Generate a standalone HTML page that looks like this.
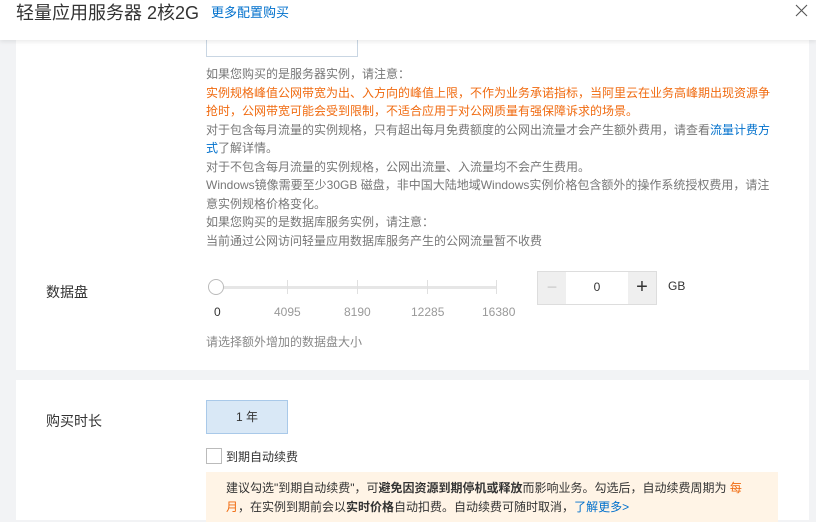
<!DOCTYPE html>
<html><head><meta charset="utf-8"><style>
*{margin:0;padding:0;box-sizing:border-box}
body{width:816px;height:519px;overflow:hidden;background:#f2f3f5;font-family:"Liberation Sans","Noto Sans CJK SC",sans-serif;position:relative;color:#666}
.a{position:absolute;white-space:nowrap}
.hdr{position:absolute;left:0;top:0;width:816px;height:40px;background:#fff;box-shadow:0 2px 4px rgba(0,0,0,.08);z-index:5}
.card{position:absolute;left:16px;width:793px;background:#fff}
.t{font-size:12px;line-height:18.5px;color:#777}
.o{color:#f06a0f}
.b{color:#0070cc}
</style></head><body>
<div class="hdr">
<div class="a" style="left:16px;top:0;font-size:18px;line-height:26px;color:#333">轻量应用服务器 2核2G</div>
<div class="a" style="left:211px;top:3px;font-size:13px;line-height:20px;color:#0070cc">更多配置购买</div>
<svg class="a" style="left:795px;top:4px" width="13" height="13" viewBox="0 0 13 13"><path d="M1 1L12 12M12 1L1 12" stroke="#555" stroke-width="1.1"/></svg>
</div>
<div class="card" style="top:30px;height:340px"></div>
<div class="a" style="left:206px;top:30px;width:152px;height:27px;border:1px solid #c9d6e3"></div>
<div class="a t" style="left:206px;top:65px;width:572px;white-space:normal">
如果您购买的是服务器实例，请注意：<br>
<span class="o">实例规格峰值公网带宽为出、入方向的峰值上限，不作为业务承诺指标，当阿里云在业务高峰期出现资源争抢时，公网带宽可能会受到限制，不适合应用于对公网质量有强保障诉求的场景。</span><br>
对于包含每月流量的实例规格，只有超出每月免费额度的公网出流量才会产生额外费用，请查看<span class="b">流量计费方式</span>了解详情。<br>
对于不包含每月流量的实例规格，公网出流量、入流量均不会产生费用。<br>
Windows镜像需要至少30GB 磁盘，非中国大陆地域Windows实例价格包含额外的操作系统授权费用，请注意实例规格价格变化。<br>
如果您购买的是数据库服务实例，请注意：<br>
当前通过公网访问轻量应用数据库服务产生的公网流量暂不收费</div>
<div class="a" style="left:46px;top:282px;font-size:14px;color:#333">数据盘</div>
<div class="a" style="left:216px;top:286px;width:280px;height:3px;background:#e6e6e6"></div>
<div class="a" style="left:287px;top:280px;width:1px;height:14px;background:#e0e0e0"></div>
<div class="a" style="left:357px;top:280px;width:1px;height:14px;background:#e0e0e0"></div>
<div class="a" style="left:427px;top:280px;width:1px;height:14px;background:#e0e0e0"></div>
<div class="a" style="left:496px;top:280px;width:1px;height:14px;background:#e0e0e0"></div>
<div class="a" style="left:208px;top:279px;width:16px;height:16px;border-radius:50%;border:1px solid #bbb;background:#fff"></div>
<div class="a" style="left:214px;top:305px;font-size:12px;color:#333">0</div>
<div class="a" style="left:274px;top:305px;font-size:12px;color:#999">4095</div>
<div class="a" style="left:344px;top:305px;font-size:12px;color:#999">8190</div>
<div class="a" style="left:411px;top:305px;font-size:12px;color:#999">12285</div>
<div class="a" style="left:482px;top:305px;font-size:12px;color:#999">16380</div>
<div class="a" style="left:206px;top:333px;font-size:12px;color:#888">请选择额外增加的数据盘大小</div>
<div class="a" style="left:537px;top:271px;width:120px;height:34px;border:1px solid #ddd;background:#fff"></div>
<div class="a" style="left:538px;top:272px;width:28px;height:32px;background:#efefef;color:#ccc;font-size:18px;text-align:center;line-height:30px">−</div>
<div class="a" style="left:628px;top:272px;width:28px;height:32px;background:#efefef;color:#333;font-size:20px;text-align:center;line-height:30px">+</div>
<div class="a" style="left:566px;top:280px;width:62px;text-align:center;font-size:12px;color:#333">0</div>
<div class="a" style="left:668px;top:279px;font-size:12px;color:#333">GB</div>
<div class="card" style="top:380px;height:140px"></div>
<div class="a" style="left:46px;top:411px;font-size:14px;color:#333">购买时长</div>
<div class="a" style="left:206px;top:400px;width:82px;height:34px;background:#d9e8f6;border:1px solid #a9c9e9;font-size:12px;color:#333;text-align:center;line-height:32px">1 年</div>
<div class="a" style="left:206px;top:448px;width:16px;height:16px;border:1px solid #bbb;background:#fff"></div>
<div class="a" style="left:226px;top:448px;font-size:12px;color:#333">到期自动续费</div>
<div class="a" style="left:206px;top:472px;width:572px;height:50px;background:#fff4e6"></div>
<div class="a" style="left:226px;top:479px;font-size:12px;line-height:18.5px;color:#333;white-space:normal;width:530px">建议勾选"到期自动续费"，可<b>避免因资源到期停机或释放</b>而影响业务。勾选后，自动续费周期为 <span class="o">每月</span>，在实例到期前会以<b>实时价格</b>自动扣费。自动续费可随时取消，<span class="b">了解更多&gt;</span></div>
</body></html>
